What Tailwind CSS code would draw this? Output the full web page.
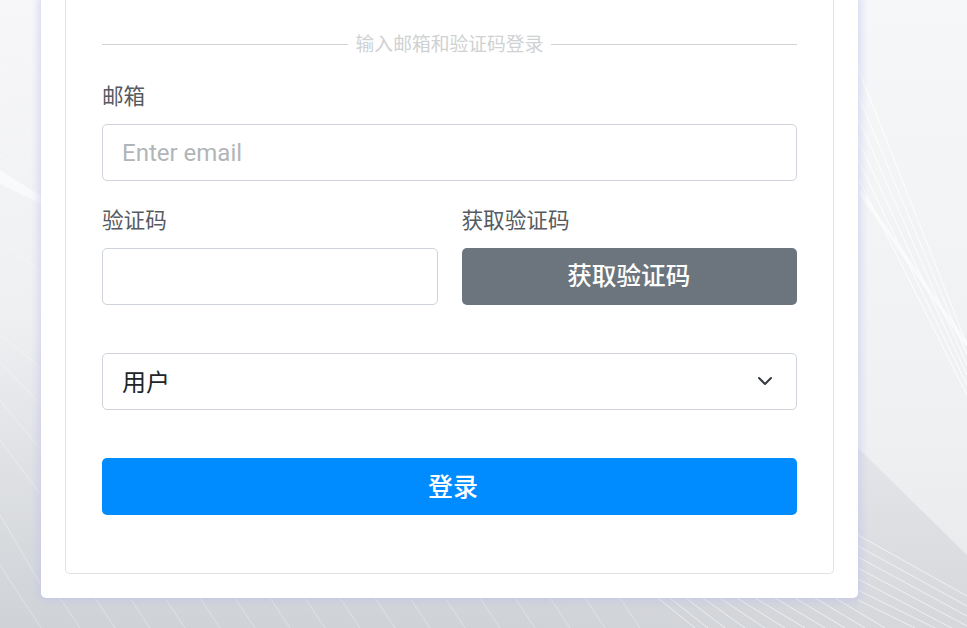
<!DOCTYPE html>
<html lang="zh-CN">
  <head>
    <meta charset="UTF-8" />
    <meta name="viewport" content="width=device-width, initial-scale=1.0" />
    <title>登录</title>
    <script src="https://cdn.jsdelivr.net/npm/@tailwindcss/browser@4"></script>
  </head>
  <body class="m-0">
    <div class="relative h-[628px] w-[967px] overflow-hidden bg-[#f3f4f6] font-['Roboto','Noto_Sans_CJK_SC',sans-serif]">
      <!-- background artwork -->
      <svg class="absolute inset-0" width="967" height="628" viewBox="0 0 967 628" fill="none">
        <defs>
          <linearGradient id="base" x1="0" y1="0" x2="0" y2="1">
            <stop offset="0" stop-color="#f7f7f9" />
            <stop offset="0.5" stop-color="#eff0f2" />
            <stop offset="0.72" stop-color="#e0e2e5" />
            <stop offset="1" stop-color="#cfd2d6" />
          </linearGradient>
          <linearGradient id="right" x1="0" y1="0" x2="0" y2="1">
            <stop offset="0" stop-color="#f6f7f8" />
            <stop offset="0.7" stop-color="#eff0f2" />
            <stop offset="1" stop-color="#e6e8ea" />
          </linearGradient>
          <linearGradient id="shade" x1="0" y1="0" x2="0" y2="1">
            <stop offset="0" stop-color="#e3e5e8" />
            <stop offset="1" stop-color="#d5d7db" />
          </linearGradient>
          <linearGradient id="strip" x1="0" y1="0" x2="1" y2="0">
            <stop offset="0" stop-color="#d5d7db" stop-opacity="0" />
            <stop offset="1" stop-color="#d5d7db" />
          </linearGradient>
        </defs>
        <rect width="967" height="628" fill="url(#base)" />
        <rect x="858" width="109" height="628" fill="url(#right)" />
        <rect x="500" y="590" width="358" height="38" fill="url(#strip)" />
        <polygon points="858,448 967,555 967,628 858,628" fill="url(#shade)" />

        <!-- right bundle, upper -->
        <g stroke="#ffffff" stroke-opacity="0.75" stroke-width="1.1">
          <path d="M858 68 L967 345" />
          <path d="M858 95 L967 355" />
          <path d="M858 118 L967 365" />
          <path d="M858 140 L967 375" />
          <path d="M858 160 L967 385" />
          <path d="M858 178 L967 395" />
        </g>
        <path d="M860 192 L967 345" stroke="#ffffff" stroke-opacity="0.55" stroke-width="4" />

        <!-- right bundle, lower -->
        <g stroke="#ffffff" stroke-opacity="0.6" stroke-width="1">
          <path d="M858 535 L967 596" />
          <path d="M858 546 L967 606" />
          <path d="M858 557 L967 616" />
          <path d="M858 568 L967 626" />
          <path d="M858 579 L967 636" />
          <path d="M858 590 L935 628" />
          <path d="M858 600 L915 628" />
          <path d="M835 598 L885 628" />
          <path d="M815 598 L865 628" />
          <path d="M795 598 L845 628" />
          <path d="M775 598 L825 628" />
          <path d="M755 598 L805 628" />
          <path d="M737 598 L785 628" />
          <path d="M720 598 L765 628" />
          <path d="M703 598 L745 628" />
          <path d="M686 598 L725 628" />
          <path d="M670 598 L708 628" />
          <path d="M658 598 L695 628" />
        </g>

        <!-- left and bottom fan -->
        <g stroke="#ffffff" stroke-opacity="0.35" stroke-width="1">
          <path d="M0 30 L41 75" stroke-opacity="0.3" />
          <path d="M0 65 L41 110" stroke-opacity="0.3" />
          <path d="M0 100 L41 145" stroke-opacity="0.3" />
          <path d="M0 130 L41 165" stroke-opacity="0.3" />
          <path d="M0 155 L41 185" stroke-opacity="0.3" />
          <path d="M0 240 L41 272" stroke-opacity="0.3" />
          <path d="M0 335 L41 368" />
          <path d="M0 362 L41 405" />
          <path d="M0 400 L41 450" />
          <path d="M0 440 L41 495" />
          <path d="M0 515 L41 585" />
          <path d="M0 565 L41 628" />
          <path d="M60 598 L80 628" />
          <path d="M95 598 L115 628" />
          <path d="M130 598 L150 628" />
          <path d="M165 598 L185 628" />
          <path d="M200 598 L220 628" />
          <path d="M235 598 L255 628" />
          <path d="M270 598 L290 628" />
          <path d="M305 598 L325 628" />
          <path d="M340 598 L360 628" />
          <path d="M375 598 L395 628" />
          <path d="M410 598 L430 628" />
          <path d="M445 598 L465 628" />
          <path d="M480 598 L500 628" />
          <path d="M515 598 L535 628" />
          <path d="M550 598 L570 628" />
          <path d="M585 598 L605 628" />
          <path d="M620 598 L640 628" />
        </g>
        <polygon points="0,170 41,196 41,204 0,184" fill="#ffffff" fill-opacity="0.55" />
      </svg>

      <div class="relative flex h-full flex-col justify-end pb-[30px] pl-[41px]">
        <!-- card -->
        <div class="w-[817px] rounded-b-[5px] bg-white px-6 pb-6 shadow-[0_0_8px_2px_rgba(190,190,240,0.6)]">
          <div class="rounded-b-[5px] border-x border-b border-[#dee2e6] px-9 pb-[58px]">
            <div class="flex items-center gap-2 pt-[31px] text-[18.8px] leading-[28px] text-[#d0d1d2]">
              <span class="h-px flex-1 bg-[#d0d2d4]"></span>
              <span class="pt-[2px]">输入邮箱和验证码登录</span>
              <span class="h-px flex-1 bg-[#d0d2d4]"></span>
            </div>

            <label class="mt-[22px] mb-[11px] block text-[21.6px] leading-[32px] text-[#565b61]">邮箱</label>
            <input type="text" placeholder="Enter email" class="block h-[57px] w-full rounded-[5px] border border-[#ced4da] px-[19px] text-[24px] text-[#212529] outline-none placeholder:text-[#b2b5b8]" />

            <div class="mt-[24px] grid grid-cols-2 gap-6">
              <div>
                <label class="mb-[11px] block text-[21.6px] leading-[32px] text-[#565b61]">验证码</label>
                <input type="text" class="block h-[57px] w-full rounded-[5px] border border-[#ced4da] px-[19px] text-[24px] outline-none" />
              </div>
              <div>
                <label class="mb-[11px] block text-[21.6px] leading-[32px] text-[#565b61]">获取验证码</label>
                <button type="button" class="block h-[57px] w-full rounded-[5px] bg-[#6c757d] pt-[2px] pr-[1px] text-[24.6px] font-medium text-white">获取验证码</button>
              </div>
            </div>

            <div class="relative mt-[48px]">
              <select class="block h-[57px] w-full appearance-none rounded-[5px] border border-[#ced4da] bg-white px-[19px] pt-[2px] text-[24px] text-[#212529] outline-none">
                <option>用户</option>
              </select>
              <svg class="pointer-events-none absolute top-[20px] right-[24px]" width="16" height="16" viewBox="0 0 16 16" fill="none">
                <path d="m2 5 6 6 6-6" stroke="#343a40" stroke-width="2" stroke-linecap="round" stroke-linejoin="round" />
              </svg>
            </div>

            <button type="button" class="mt-[48px] block h-[57px] w-full rounded-[5px] bg-[#008cff] pt-[2px] pl-[7px] text-[25px] font-medium text-white">登录</button>
          </div>
        </div>
      </div>
    </div>
  </body>
</html>
